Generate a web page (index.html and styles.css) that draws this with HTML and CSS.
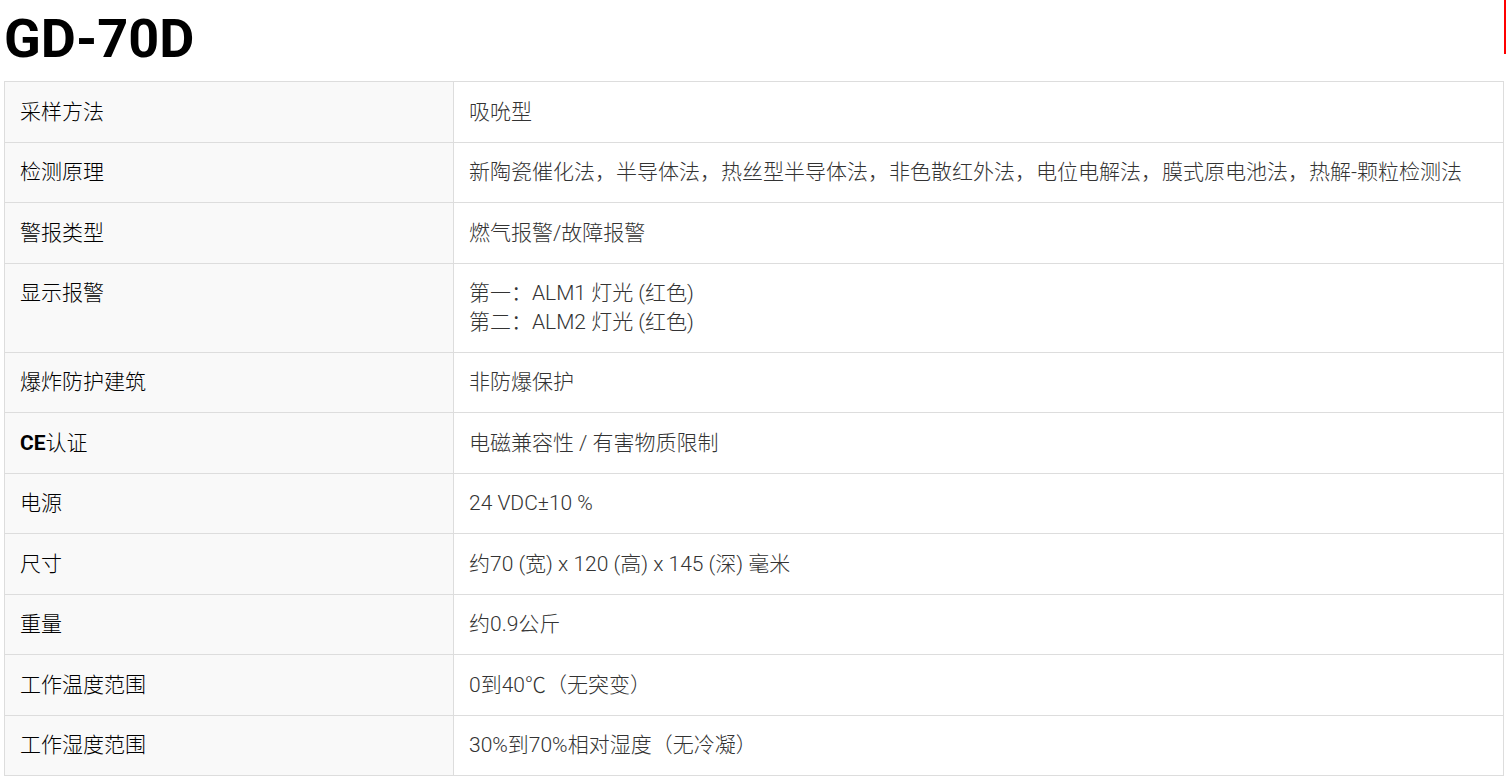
FILE: index.html
```html
<!DOCTYPE html>
<html lang="zh-CN">
<head>
<meta charset="utf-8">
<title>GD-70D</title>
<link rel="stylesheet" href="styles.css">
</head>
<body>
<div class="page">
  <span class="edge-mark"></span>
  <h1 class="title">GD-70D</h1>
  <table class="spec">
    <tbody>
      <tr><th>采样方法</th><td>吸吮型</td></tr>
      <tr><th>检测原理</th><td>新陶瓷催化法，半导体法，热丝型半导体法，非色散红外法，电位电解法，膜式原电池法，热解-颗粒检测法</td></tr>
      <tr><th>警报类型</th><td>燃气报警/故障报警</td></tr>
      <tr><th>显示报警</th><td>第一：ALM1 灯光 (红色)<br>第二：ALM2 灯光 (红色)</td></tr>
      <tr><th>爆炸防护建筑</th><td>非防爆保护</td></tr>
      <tr><th><strong>CE</strong>认证</th><td>电磁兼容性 / 有害物质限制</td></tr>
      <tr><th>电源</th><td>24 VDC±10 %</td></tr>
      <tr><th>尺寸</th><td>约70 (宽) x 120 (高) x 145 (深) 毫米</td></tr>
      <tr><th>重量</th><td>约0.9公斤</td></tr>
      <tr><th>工作温度范围</th><td>0到40℃（无突变）</td></tr>
      <tr><th>工作湿度范围</th><td>30%到70%相对湿度（无冷凝）</td></tr>
    </tbody>
  </table>
</div>
</body>
</html>
```
FILE: styles.css
```css
html, body {
  margin: 0;
  padding: 0;
  background: #fff;
}
body {
  font-family: Roboto, "Noto Sans CJK SC", sans-serif;
  color: #222;
}
.page {
  position: relative;
  padding: 0 2px 0 4px;
}
.edge-mark {
  position: absolute;
  top: 0;
  right: 0;
  width: 2px;
  height: 54px;
  background: #f00;
}
.title {
  margin: 0 0 9px 0;
  padding-top: 6px;
  font-family: Roboto, "Noto Sans CJK SC", sans-serif;
  font-weight: 700;
  font-size: 54px;
  line-height: 66px;
  color: #000;
}
.spec {
  width: 1500px;
  border-collapse: collapse;
  border: 1px solid #ddd;
  font-size: 21px;
  line-height: 28.5px;
}
.spec th,
.spec td {
  border: 1px solid #ddd;
  padding: 15.5px 15px;
  text-align: left;
  vertical-align: top;
}
.spec th {
  width: 418px;
  background: #f9f9f9;
  font-weight: 300;
  color: #000;
}
.spec th strong {
  font-weight: 700;
}
.spec td {
  color: #333;
  font-weight: 300;
}
```
